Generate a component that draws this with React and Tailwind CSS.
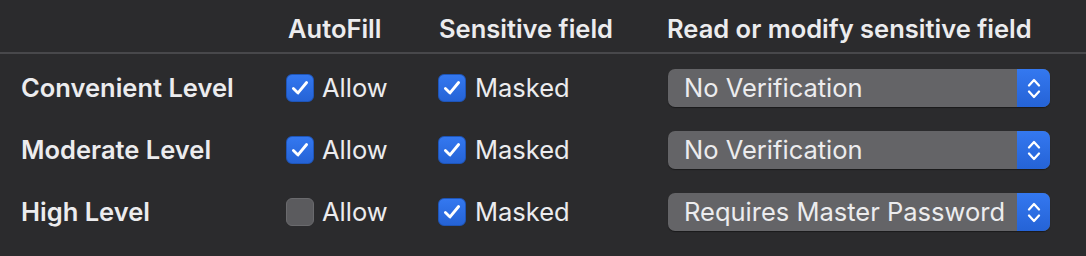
import React from "react";

function Check({ checked }) {
  if (!checked) {
    return <div className="w-[28px] h-[28px] rounded-[6px] bg-[#5b5b5e] border border-[#6a6a6d] shrink-0" />;
  }
  return (
    <div className="w-[28px] h-[28px] rounded-[6px] bg-gradient-to-b from-[#3478f0] to-[#2563d6] border border-[#1e55b8] shrink-0 flex items-center justify-center">
      <svg width="22" height="22" viewBox="0 0 20 20" fill="none">
        <path d="M4 10.5 L8.2 14.5 L16 5" stroke="white" strokeWidth="2.6" strokeLinecap="round" strokeLinejoin="round" />
      </svg>
    </div>
  );
}

function Popup({ text }) {
  return (
    <div className="w-[382px] h-[38px] rounded-[7px] bg-[#646467] flex items-stretch overflow-hidden shadow-[0_1px_1px_rgba(0,0,0,0.4)]">
      <div className="flex-1 flex items-center pl-[16px] text-[#ececee] text-[25.5px]">{text}</div>
      <div className="w-[33px] bg-gradient-to-b from-[#3478f0] to-[#2563d6] flex flex-col items-center justify-center gap-[3px]">
        <svg width="14" height="9" viewBox="0 0 14 9" fill="none">
          <path d="M2 7.5 L7 2 L12 7.5" stroke="white" strokeWidth="2.2" strokeLinecap="round" strokeLinejoin="round" />
        </svg>
        <svg width="14" height="9" viewBox="0 0 14 9" fill="none">
          <path d="M2 1.5 L7 7 L12 1.5" stroke="white" strokeWidth="2.2" strokeLinecap="round" strokeLinejoin="round" />
        </svg>
      </div>
    </div>
  );
}

const rows = [
  { label: "Convenient Level", allow: true, masked: true, popup: "No Verification" },
  { label: "Moderate Level", allow: true, masked: true, popup: "No Verification" },
  { label: "High Level", allow: false, masked: true, popup: "Requires Master Password" },
];

export default function App() {
  return (
    <div className="w-[1086px] h-[256px] bg-[#2b2b2d] text-[#ececee] overflow-hidden" style={{ fontFamily: "Inter, 'Noto Sans', sans-serif" }}>
      <div className="h-[54px] pt-[6px] border-b-[2px] border-[#48484b] grid grid-cols-[267px_151px_228px_1fr] items-center pl-[21px] text-[25.5px] font-semibold">
        <div />
        <div>AutoFill</div>
        <div>Sensitive field</div>
        <div>Read or modify sensitive field</div>
      </div>
      <div className="pt-[3px]">
        {rows.map((r) => (
          <div key={r.label} className="h-[62px] grid grid-cols-[265px_152px_230px_382px] items-center pl-[21px]">
            <div className="text-[25.5px] font-semibold">{r.label}</div>
            <div className="flex items-center gap-[8px] text-[25.5px]">
              <Check checked={r.allow} />
              <span>Allow</span>
            </div>
            <div className="flex items-center gap-[9px] text-[25.5px]">
              <Check checked={r.masked} />
              <span>Masked</span>
            </div>
            <Popup text={r.popup} />
          </div>
        ))}
      </div>
    </div>
  );
}
